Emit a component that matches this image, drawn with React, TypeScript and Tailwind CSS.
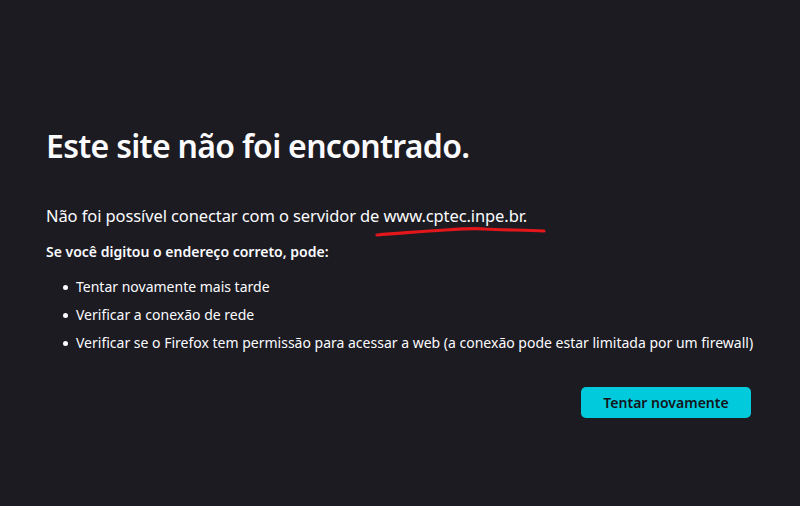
export default function App() {
  const items = [
    'Tentar novamente mais tarde',
    'Verificar a conexão de rede',
    'Verificar se o Firefox tem permissão para acessar a web (a conexão pode estar limitada por um firewall)',
  ];

  return (
    <div className="w-[800px] h-[506px] bg-[#1c1b22] text-[#fbfbfe] font-['Noto_Sans',sans-serif] px-[46px] pt-[124px] overflow-hidden">
      <h1 className="text-[32px] font-semibold leading-[44px] tracking-[-0.7px]">Este site não foi encontrado.</h1>

      <div className="relative mt-[36px]">
        <p className="text-[16.5px] leading-[24px] tracking-[-0.1px]">
          Não foi possível conectar com o servidor de www.cptec.inpe.br.
        </p>
        {/* hand-drawn red mark under the address */}
        <svg className="absolute left-[329px] top-[20px]" width="172" height="14" viewBox="0 0 172 14">
          <path
            d="M2 11 C 30 9, 50 7, 70 6 C 85 5, 100 4, 110 5 C 130 6, 150 6, 169 7"
            fill="none"
            stroke="#e3161b"
            strokeWidth="3.2"
            strokeLinecap="round"
          />
        </svg>
      </div>

      <p className="mt-[14px] text-[14px] font-semibold leading-[20px]">Se você digitou o endereço correto, pode:</p>

      <ul className="mt-[15px] ml-[17px] flex flex-col gap-[8px] text-[14px] leading-[20px]">
        {items.map((it) => (
          <li key={it} className="flex items-center gap-[8px] whitespace-nowrap">
            <span className="w-[5px] h-[5px] rounded-full bg-[#fbfbfe] shrink-0" />
            <span>{it}</span>
          </li>
        ))}
      </ul>

      <div className="flex justify-end mt-[34px] pr-[3px]">
        <button className="h-[31px] w-[170px] rounded-[5px] bg-[#00cadb] text-[#15141a] text-[14px] font-semibold">
          Tentar novamente
        </button>
      </div>
    </div>
  );
}
